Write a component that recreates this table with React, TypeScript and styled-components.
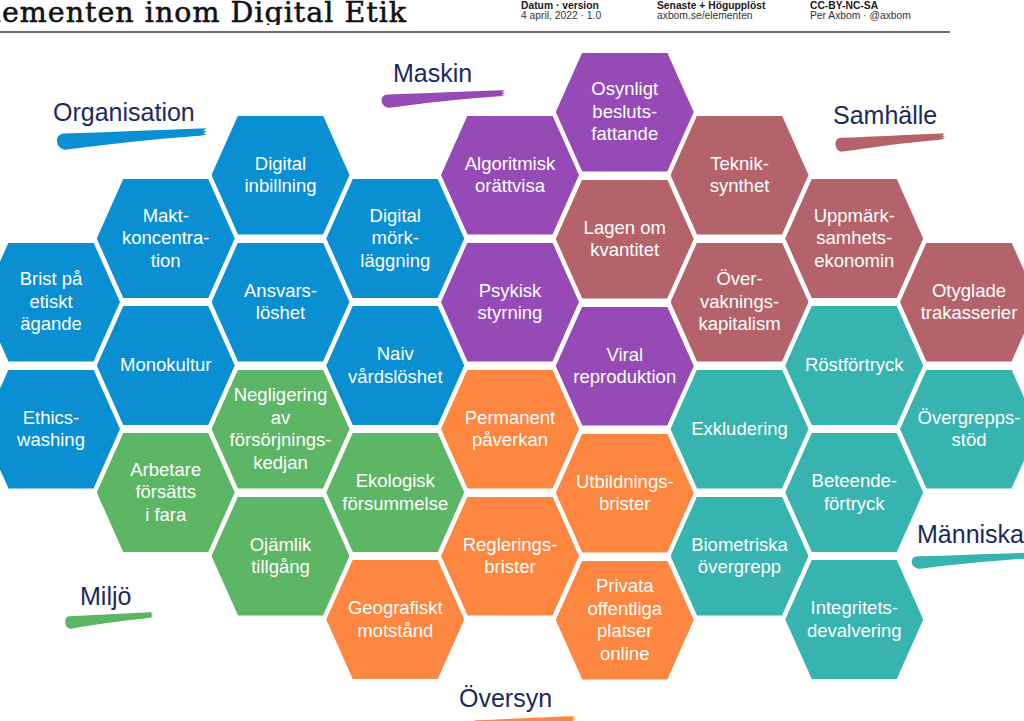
import React from "react";
import styled, { createGlobalStyle } from "styled-components";

const GlobalStyle = createGlobalStyle`
  html, body { margin: 0; padding: 0; background: #ffffff; }
  body { font-family: "Liberation Sans", Arial, sans-serif; }
  * { box-sizing: border-box; }
`;

const C = {
  blue: "#0a8fd3",
  purple: "#954ab5",
  red: "#b4636a",
  green: "#5db566",
  orange: "#fd8641",
  teal: "#37b4b0",
  navy: "#1b2a5e",
};

type Cell = { lines: string[]; color: string };
type Col = { top: number; cells: Cell[] };

const HEX_W = 138;
const HEX_H = 119;
const COL_STEP = 114.75;
const BOARD_TOP = 33;

const columns: Col[] = [
  {
    top: 242.5,
    cells: [
      { lines: ["Brist på", "etiskt", "ägande"], color: C.blue },
      { lines: ["Ethics-", "washing"], color: C.blue },
    ],
  },
  {
    top: 179,
    cells: [
      { lines: ["Makt-", "koncentra-", "tion"], color: C.blue },
      { lines: ["Monokultur"], color: C.blue },
      { lines: ["Arbetare", "försätts", "i fara"], color: C.green },
    ],
  },
  {
    top: 115.5,
    cells: [
      { lines: ["Digital", "inbillning"], color: C.blue },
      { lines: ["Ansvars-", "löshet"], color: C.blue },
      { lines: ["Negligering", "av", "försörjnings-", "kedjan"], color: C.green },
      { lines: ["Ojämlik", "tillgång"], color: C.green },
    ],
  },
  {
    top: 179,
    cells: [
      { lines: ["Digital", "mörk-", "läggning"], color: C.blue },
      { lines: ["Naiv", "vårdslöshet"], color: C.blue },
      { lines: ["Ekologisk", "försummelse"], color: C.green },
      { lines: ["Geografiskt", "motstånd"], color: C.orange },
    ],
  },
  {
    top: 115.5,
    cells: [
      { lines: ["Algoritmisk", "orättvisa"], color: C.purple },
      { lines: ["Psykisk", "styrning"], color: C.purple },
      { lines: ["Permanent", "påverkan"], color: C.orange },
      { lines: ["Reglerings-", "brister"], color: C.orange },
    ],
  },
  {
    top: 52.5,
    cells: [
      { lines: ["Osynligt", "besluts-", "fattande"], color: C.purple },
      { lines: ["Lagen om", "kvantitet"], color: C.red },
      { lines: ["Viral", "reproduktion"], color: C.purple },
      { lines: ["Utbildnings-", "brister"], color: C.orange },
      { lines: ["Privata", "offentliga", "platser", "online"], color: C.orange },
    ],
  },
  {
    top: 115.5,
    cells: [
      { lines: ["Teknik-", "synthet"], color: C.red },
      { lines: ["Över-", "vaknings-", "kapitalism"], color: C.red },
      { lines: ["Exkludering"], color: C.teal },
      { lines: ["Biometriska", "övergrepp"], color: C.teal },
    ],
  },
  {
    top: 179,
    cells: [
      { lines: ["Uppmärk-", "samhets-", "ekonomin"], color: C.red },
      { lines: ["Röstförtryck"], color: C.teal },
      { lines: ["Beteende-", "förtryck"], color: C.teal },
      { lines: ["Integritets-", "devalvering"], color: C.teal },
    ],
  },
  {
    top: 242.5,
    cells: [
      { lines: ["Otyglade", "trakasserier"], color: C.red },
      { lines: ["Övergrepps-", "stöd"], color: C.teal },
    ],
  },
];

type LabelDef = {
  text: string;
  x: number;
  y: number;
  color: string;
  dx: number;
  dy: number;
  w: number;
  h: number;
};

const labels: LabelDef[] = [
  { text: "Organisation", x: 53, y: 100, color: C.blue, dx: 2, dy: 28, w: 152, h: 22 },
  { text: "Maskin", x: 393, y: 61, color: C.purple, dx: -13, dy: 29, w: 125, h: 18 },
  { text: "Samhälle", x: 833, y: 103, color: C.red, dx: 1, dy: 30, w: 111, h: 19 },
  { text: "Miljö", x: 80, y: 584, color: C.green, dx: -16, dy: 28, w: 89, h: 17 },
  { text: "Människa", x: 917, y: 522, color: C.teal, dx: -7, dy: 30, w: 130, h: 17 },
  { text: "Översyn", x: 459, y: 686, color: C.orange, dx: 11, dy: 30, w: 105, h: 17 },
];

const Page = styled.div`
  position: relative;
  width: 1024px;
  height: 721px;
  overflow: hidden;
  background: #ffffff;
`;

const Header = styled.header`
  display: flex;
  align-items: flex-start;
  width: 950px;
  height: 33px;
  border-bottom: 2px solid #6d6d6d;
`;

const TitleBox = styled.div`
  width: 521px;
  flex: 0 0 521px;
  overflow: hidden;
`;

const Title = styled.h1`
  margin: 0 0 0 -30px;
  font-family: "DejaVu Serif", "Liberation Serif", serif;
  font-weight: 400;
  font-size: 28.5px;
  line-height: 25px;
  letter-spacing: 1px;
  color: #111111;
  -webkit-text-stroke: 0.55px #111111;
  white-space: nowrap;
`;

const MetaCol = styled.div<{ $w: number }>`
  width: ${(p) => p.$w}px;
  flex: 0 0 ${(p) => p.$w}px;
  padding-top: 0.5px;
  font-family: "Liberation Sans", Arial, sans-serif;
  font-size: 10.3px;
  line-height: 10px;
  white-space: nowrap;
`;

const MetaHead = styled.div`
  font-weight: 700;
  color: #1a1a1a;
`;

const MetaSub = styled.div`
  color: #333333;
`;

const Board = styled.div`
  display: flex;
  align-items: flex-start;
  margin-left: -18px;
`;

const Column = styled.div<{ $pad: number }>`
  display: flex;
  flex-direction: column;
  gap: 8px;
  flex: 0 0 ${HEX_W}px;
  padding-top: ${(p) => p.$pad}px;
  & + & {
    margin-left: ${COL_STEP - HEX_W}px;
  }
`;

const Hex = styled.div<{ $bg: string }>`
  width: ${HEX_W}px;
  height: ${HEX_H}px;
  background: ${(p) => p.$bg};
  clip-path: polygon(19.2% 0, 80.8% 0, 100% 50%, 80.8% 100%, 19.2% 100%, 0 50%);
  display: flex;
  flex-direction: column;
  align-items: center;
  justify-content: center;
  text-align: center;
  color: #ffffff;
  font-family: "Liberation Sans", Arial, sans-serif;
  font-size: 18.5px;
  line-height: 22.5px;
`;

const HexLine = styled.span`
  display: block;
  white-space: nowrap;
`;

const Label = styled.div<{ $x: number; $y: number }>`
  position: absolute;
  left: ${(p) => p.$x}px;
  top: ${(p) => p.$y}px;
  display: flex;
  flex-direction: column;
  align-items: flex-start;
`;

const LabelText = styled.div`
  font-family: "Liberation Sans", Arial, sans-serif;
  font-size: 25px;
  line-height: 25px;
  height: 25px;
  color: ${C.navy};
  white-space: nowrap;
`;

const BrushSvg = styled.svg<{ $dx: number; $dy: number }>`
  display: block;
  margin-left: ${(p) => p.$dx}px;
  margin-top: ${(p) => p.$dy - 25}px;
`;

const Brush: React.FC<{ color: string; dx: number; dy: number; w: number; h: number }> = ({
  color,
  dx,
  dy,
  w,
  h,
}) => (
  <BrushSvg
    $dx={dx}
    $dy={dy}
    width={w}
    height={h}
    viewBox="0 0 100 20"
    preserveAspectRatio="none"
  >
    <path
      d="M6 5 C 35 3.8, 70 1.6, 96 0.4 L 100 0.3 L 97.5 2.2 L 100 3.4 L 97.5 4.6 L 99.5 5.8 L 95.5 7 C 70 9.5, 35 14.5, 8 19.6 C 0.5 20.8, -1.5 5.6, 6 5 Z"
      fill={color}
    />
  </BrushSvg>
);

export default function App() {
  return (
    <>
      <GlobalStyle />
      <Page>
        <Header>
          <TitleBox>
            <Title>Elementen inom Digital Etik</Title>
          </TitleBox>
          <MetaCol $w={136}>
            <MetaHead>Datum · version</MetaHead>
            <MetaSub>4 april, 2022 · 1.0</MetaSub>
          </MetaCol>
          <MetaCol $w={153}>
            <MetaHead>Senaste + Högupplöst</MetaHead>
            <MetaSub>axbom.se/elementen</MetaSub>
          </MetaCol>
          <MetaCol $w={140}>
            <MetaHead>CC-BY-NC-SA</MetaHead>
            <MetaSub>Per Axbom · @axbom</MetaSub>
          </MetaCol>
        </Header>
        <Board>
          {columns.map((col, i) => (
            <Column key={i} $pad={col.top - BOARD_TOP}>
              {col.cells.map((cell, j) => (
                <Hex key={j} $bg={cell.color}>
                  {cell.lines.map((l, k) => (
                    <HexLine key={k}>{l}</HexLine>
                  ))}
                </Hex>
              ))}
            </Column>
          ))}
        </Board>
        {labels.map((lb) => (
          <Label key={lb.text} $x={lb.x} $y={lb.y}>
            <LabelText>{lb.text}</LabelText>
            <Brush color={lb.color} dx={lb.dx} dy={lb.dy} w={lb.w} h={lb.h} />
          </Label>
        ))}
      </Page>
    </>
  );
}
